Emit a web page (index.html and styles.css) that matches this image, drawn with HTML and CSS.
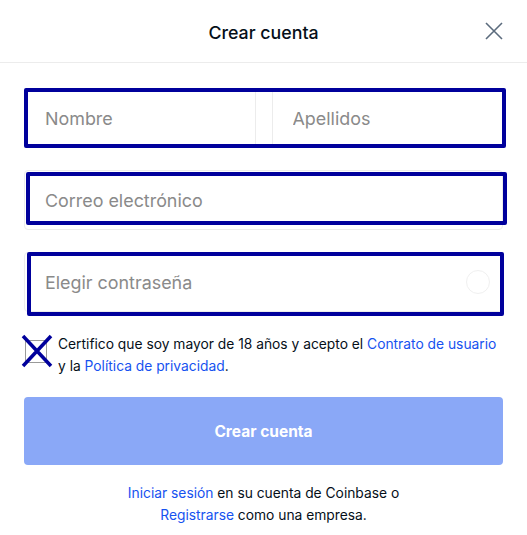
FILE: index.html
```html
<!DOCTYPE html>
<html lang="es">
<head>
  <meta charset="UTF-8">
  <meta name="viewport" content="width=device-width, initial-scale=1.0">
  <title>Crear cuenta</title>
  <link rel="stylesheet" href="styles.css">
</head>
<body>
  <div class="header">
    <span></span>
    <h1>Crear cuenta</h1>
    <button class="close" type="button" aria-label="Cerrar">
      <svg width="18" height="18" viewBox="0 0 18 18">
        <path d="M1 1 L17 17 M17 1 L1 17" stroke="#5b6b7d" stroke-width="1.6" fill="none"/>
      </svg>
    </button>
  </div>

  <form class="form">
    <div class="field field-names">
      <input type="text" placeholder="Nombre">
      <input type="text" placeholder="Apellidos">
      <span class="mark mark-1"></span>
    </div>

    <div class="field">
      <input type="email" placeholder="Correo electrónico">
      <span class="mark mark-2"></span>
    </div>

    <div class="field">
      <input type="password" placeholder="Elegir contraseña">
      <span class="strength"></span>
      <span class="mark mark-3"></span>
    </div>

    <label class="terms">
      <span class="check">
        <svg class="cross" width="32" height="34" viewBox="0 0 32 34">
          <path d="M2 2 L30 32 M30 2 L2 32" stroke="#00009c" stroke-width="3.5" fill="none"/>
        </svg>
      </span>
      <span>Certifico que soy mayor de 18 años y acepto el <a href="#">Contrato de usuario</a> y la <a href="#">Política de privacidad</a>.</span>
    </label>

    <button class="submit" type="button">Crear cuenta</button>

    <p class="footer">
      <a href="#">Iniciar sesión</a> en su cuenta de Coinbase o<br>
      <a href="#">Registrarse</a> como una empresa.
    </p>
  </form>
</body>
</html>
```

FILE: styles.css
```css
body {
  margin: 0;
  font-family: Inter, "Liberation Sans", sans-serif;
  color: #050f19;
  background-color: #fff;
}
a {
  color: #1652f0;
  text-decoration: none;
}
.header {
  display: grid;
  grid-template-columns: 1fr auto 1fr;
  align-items: center;
  height: 62px;
  border-bottom: 1px solid #ececec;
}
.header h1 {
  margin: 2px 0 0;
  font-size: 17.8px;
  font-weight: 500;
}
.close {
  justify-self: end;
  margin-right: 24px;
  padding: 0;
  border: none;
  background: none;
  display: flex;
}
.form {
  padding: 25px 24px 0;
}
.field {
  position: relative;
  display: flex;
  gap: 16px;
  margin-bottom: 22px;
}
.field input {
  flex: 1;
  min-width: 0;
  height: 60px;
  box-sizing: border-box;
  padding: 1px 20px 0;
  border: 1px solid #ececec;
  border-radius: 4px;
  font-family: inherit;
  font-size: 17.9px;
  color: #050f19;
}
.field input::placeholder {
  color: #8a8a8a;
}
.strength {
  position: absolute;
  right: 13px;
  top: 18px;
  width: 22px;
  height: 22px;
  border: 1.5px solid #f0f0f0;
  border-radius: 50%;
}
/* recuadros de anotacion sobre los campos */
.mark {
  position: absolute;
  border: 4px solid #00009c;
  border-radius: 2px;
  pointer-events: none;
}
.mark-1 {
  left: 0;
  top: 0;
  right: -3px;
  bottom: 0;
}
.mark-2 {
  left: 2px;
  top: 2px;
  right: -4px;
  bottom: 5px;
}
.mark-3 {
  left: 3px;
  top: 0;
  right: -1px;
  bottom: -4px;
}
.terms {
  display: flex;
  gap: 11px;
  margin-top: -1px;
  font-size: 13.8px;
  line-height: 22px;
}
.check {
  position: relative;
  flex: none;
  width: 20px;
  height: 21px;
  margin: 7px 0 0 1px;
  border: 1.5px solid #9a9a9a;
}
.cross {
  position: absolute;
  left: -5px;
  top: -7px;
}
.submit {
  display: block;
  width: 100%;
  height: 68px;
  margin-top: 20px;
  border: none;
  border-radius: 4px;
  background-color: #8aa8f7;
  color: #fff;
  font-family: inherit;
  font-size: 15.5px;
  font-weight: 700;
}
.footer {
  margin: 17px 0 0;
  text-align: center;
  font-size: 13.8px;
  line-height: 22px;
}
```
